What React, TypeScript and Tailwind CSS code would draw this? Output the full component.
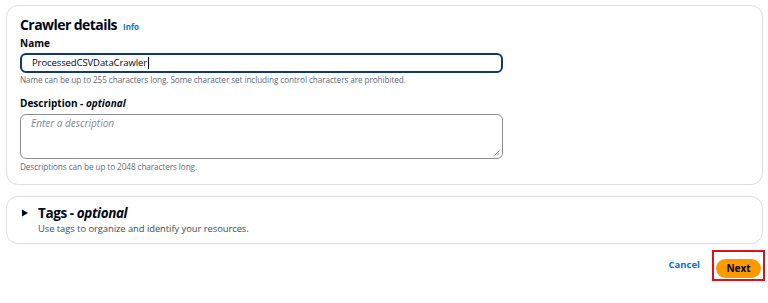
export default function App() {
  return (
    <div
      className="w-[768px] h-[303px] bg-white px-[6px] pt-[5px] text-[#000716]"
      style={{ fontFamily: '"Open Sans", "Noto Sans", sans-serif' }}
    >
      <div className="h-[180px] w-[757px] rounded-[12px] border border-[#dedee0] pl-[13px] pt-[12px]">
        <div className="flex items-baseline gap-[6px] leading-none">
          <h2 className="text-[14px] font-bold tracking-[-0.04em]">Crawler details</h2>
          <span className="text-[8px] font-bold text-[#0972d3]">Info</span>
        </div>
        <div className="mt-[6px] text-[10px] font-bold leading-none">Name</div>
        <div className="mt-[5px] flex h-[20px] w-[483px] items-center rounded-[6px] border-2 border-[#0f3b6b] pl-[10px] text-[9.5px] tracking-[-0.01em]">
          ProcessedCSVDataCrawler
          <span className="ml-px h-[12px] w-px bg-black" />
        </div>
        <p className="mt-[2px] text-[8.2px] leading-[10px] tracking-[-0.01em] text-[#5f6b7a]">
          Name can be up to 255 characters long. Some character set including control characters are prohibited.
        </p>
        <div className="mt-[13px] text-[10px] font-bold leading-none">
          Description - <i>optional</i>
        </div>
        <div className="relative mt-[6px] h-[45px] w-[483px] rounded-[6px] border border-[#8c8c94] pl-[10px] pt-[1px] text-[10px] italic text-[#7d8998]">
          Enter a description
          <svg className="absolute bottom-[2px] right-[2px]" width="6" height="6" viewBox="0 0 6 6">
            <path d="M5.5 0.5 L0.5 5.5 M5.5 3 L3 5.5" stroke="#8c8c94" strokeWidth="0.8" />
          </svg>
        </div>
        <p className="mt-[3px] text-[8.2px] leading-[10px] tracking-[-0.01em] text-[#5f6b7a]">
          Descriptions can be up to 2048 characters long.
        </p>
      </div>

      <div className="mt-[11px] flex h-[48px] w-[757px] items-center rounded-[12px] border border-[#dedee0] pl-[14px]">
        <svg width="8" height="8" viewBox="0 0 8 8" className="mr-[9px] mb-[14px]">
          <path d="M1 0.5 L7 4 L1 7.5 Z" fill="#000716" />
        </svg>
        <div className="leading-none">
          <div className="text-[13.5px] font-bold tracking-[-0.03em]">
            Tags - <i>optional</i>
          </div>
          <div className="mt-[3px] text-[9.4px] tracking-[-0.005em] text-[#414d5c]">
            Use tags to organize and identify your resources.
          </div>
        </div>
      </div>

      <div className="mt-[6px] -mr-[3px] flex items-center justify-end">
        <span className="mr-[12px] text-[9.5px] font-bold text-[#0972d3]">Cancel</span>
        <div className="border-2 border-[#e0101a] px-[2px] py-[1.5px]">
          <button className="h-[19px] w-[45px] rounded-full bg-[#ff9900] text-[10px] font-bold text-[#000716]">
            Next
          </button>
        </div>
      </div>
    </div>
  );
}
